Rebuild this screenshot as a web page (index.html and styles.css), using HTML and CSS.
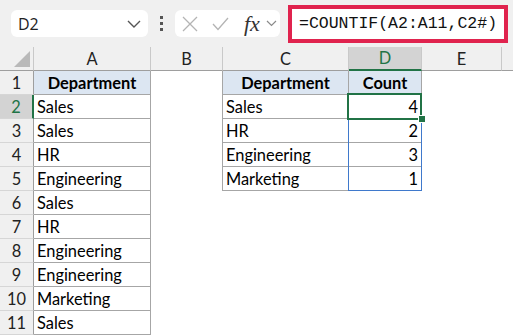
FILE: index.html
```html
<!DOCTYPE html>
<html lang="en">
<head>
  <meta charset="UTF-8" />
  <title>COUNTIF spill</title>
  <link rel="stylesheet" href="styles.css">
</head>
<body>
  <div class="toolbar">
    <div class="namebox">
      <span>D2</span>
      <svg width="14" height="8" viewBox="0 0 14 8"><path d="M1 1 L7 7 L13 1" fill="none" stroke="#555" stroke-width="1.4"/></svg>
    </div>
    <div class="dots"><i></i><i></i><i></i></div>
    <div class="fxbox">
      <svg width="16" height="16" viewBox="0 0 16 16"><path d="M1 1 L15 15 M15 1 L1 15" stroke="#b4b4b4" stroke-width="1.3"/></svg>
      <svg width="17" height="14" viewBox="0 0 17 14"><path d="M1 7 L6 12.5 L16 1" fill="none" stroke="#b4b4b4" stroke-width="1.3"/></svg>
      <span class="fx">fx</span>
      <svg width="11" height="7" viewBox="0 0 11 7"><path d="M1 1 L5.5 5.5 L10 1" fill="none" stroke="#8a8a8a" stroke-width="1.2"/></svg>
    </div>
    <div class="formula">=COUNTIF(A2:A11,C2#)</div>
  </div>

  <div class="sheet">
    <div class="corner"><span class="tri"></span></div>
    <div class="colhdr">A</div>
    <div class="colhdr">B</div>
    <div class="colhdr">C</div>
    <div class="colhdr sel">D</div>
    <div class="colhdr">E</div>
    <div class="colhdr rest"></div>

    <div class="rowhdr">1</div>
    <div class="cell bd th">Department</div>
    <div class="cell edge"></div>
    <div class="cell bd th">Department</div>
    <div class="cell bd th">Count</div>
    <div class="cell"></div>
    <div class="cell"></div>

    <div class="rowhdr sel">2</div>
    <div class="cell bd">Sales</div>
    <div class="cell edge"></div>
    <div class="cell bd">Sales</div>
    <div class="cell num active">4<span class="handle"></span></div>
    <div class="cell"></div>
    <div class="cell"></div>

    <div class="rowhdr">3</div>
    <div class="cell bd">Sales</div>
    <div class="cell edge"></div>
    <div class="cell bd">HR</div>
    <div class="cell bd num">2</div>
    <div class="cell"></div>
    <div class="cell"></div>

    <div class="rowhdr">4</div>
    <div class="cell bd">HR</div>
    <div class="cell edge"></div>
    <div class="cell bd">Engineering</div>
    <div class="cell bd num">3</div>
    <div class="cell"></div>
    <div class="cell"></div>

    <div class="rowhdr">5</div>
    <div class="cell bd">Engineering</div>
    <div class="cell edge"></div>
    <div class="cell bd">Marketing</div>
    <div class="cell bd num">1</div>
    <div class="cell"></div>
    <div class="cell"></div>

    <div class="rowhdr">6</div>
    <div class="cell bd">Sales</div>
    <div class="cell"></div>
    <div class="cell"></div>
    <div class="cell"></div>
    <div class="cell"></div>
    <div class="cell"></div>

    <div class="rowhdr">7</div>
    <div class="cell bd">HR</div>
    <div class="cell"></div>
    <div class="cell"></div>
    <div class="cell"></div>
    <div class="cell"></div>
    <div class="cell"></div>

    <div class="rowhdr">8</div>
    <div class="cell bd">Engineering</div>
    <div class="cell"></div>
    <div class="cell"></div>
    <div class="cell"></div>
    <div class="cell"></div>
    <div class="cell"></div>

    <div class="rowhdr">9</div>
    <div class="cell bd">Engineering</div>
    <div class="cell"></div>
    <div class="cell"></div>
    <div class="cell"></div>
    <div class="cell"></div>
    <div class="cell"></div>

    <div class="rowhdr">10</div>
    <div class="cell bd">Marketing</div>
    <div class="cell"></div>
    <div class="cell"></div>
    <div class="cell"></div>
    <div class="cell"></div>
    <div class="cell"></div>

    <div class="rowhdr">11</div>
    <div class="cell bd">Sales</div>
    <div class="cell"></div>
    <div class="cell"></div>
    <div class="cell"></div>
    <div class="cell"></div>
    <div class="cell"></div>
  </div>
</body>
</html>
```

FILE: styles.css
```css
body {
  margin: 0;
  background: #fff;
  font-family: 'Lato', 'Liberation Sans', sans-serif;
  color: #000;
  overflow: hidden;
}

.toolbar {
  height: 47px;
  background: #f0f0f0;
  display: flex;
  align-items: center;
  box-sizing: border-box;
}

.namebox {
  margin-left: 11px;
  width: 137px;
  height: 27px;
  background: #fff;
  border-radius: 6px;
  display: flex;
  align-items: center;
  justify-content: space-between;
  padding: 0 7px 0 7px;
  box-sizing: border-box;
  font-family: 'Open Sans', sans-serif;
  font-size: 16px;
  color: #222;
}

.dots {
  width: 27px;
  display: flex;
  flex-direction: column;
  align-items: center;
  gap: 3px;
}

.dots i {
  width: 3px;
  height: 3px;
  background: #555;
  display: block;
}

.fxbox {
  width: 105px;
  height: 27px;
  background: #fff;
  border-radius: 6px;
  display: flex;
  align-items: center;
  padding-left: 7px;
  box-sizing: border-box;
}

.fxbox svg:nth-child(2) {
  margin-left: 14px;
}

.fx {
  font-family: 'Liberation Serif', serif;
  font-style: italic;
  font-size: 22px;
  color: #333;
  margin-left: 15px;
  margin-right: 6px;
  line-height: 1;
}

.formula {
  margin-left: 8px;
  width: 220px;
  height: 38px;
  border: 4px solid #e0234e;
  background: #fff;
  box-sizing: border-box;
  font-family: 'Liberation Mono', monospace;
  font-size: 16.5px;
  line-height: 30px;
  padding-left: 7px;
  color: #111;
}

.sheet {
  display: grid;
  grid-template-columns: 34px 117px 72px 126px 73px 80px 1fr;
  grid-auto-rows: 24px;
  font-size: 16.4px;
}

.corner {
  background: #f0f0f0;
  border-right: 1px solid #c9c9c9;
  border-bottom: 1px solid #9e9e9e;
  position: relative;
}

.tri {
  position: absolute;
  right: 3px;
  bottom: 3px;
  width: 0;
  height: 0;
  border-left: 16px solid transparent;
  border-bottom: 16px solid #b9b9b9;
}

.colhdr {
  background: #f0f0f0;
  border-right: 1px solid #c9c9c9;
  border-bottom: 1px solid #9e9e9e;
  text-align: center;
  line-height: 23px;
  color: #222;
}

.colhdr.rest {
  border-right: none;
}

.colhdr.sel {
  background: #d3d3d3;
  color: #217346;
  border-bottom: 2px solid #217346;
  line-height: 22px;
}

.rowhdr {
  background: #f0f0f0;
  border-right: 1px solid #9e9e9e;
  border-bottom: 1px solid #d6d6d6;
  text-align: center;
  line-height: 23px;
  color: #222;
}

.rowhdr.sel {
  background: #d3d3d3;
  color: #217346;
  border-right: 2px solid #217346;
}

.cell {
  padding: 0 3px;
  line-height: 23px;
  white-space: nowrap;
}

.bd {
  border-right: 1px solid #a6a6a6;
  border-bottom: 1px solid #a6a6a6;
}

.edge {
  border-right: 1px solid #a6a6a6;
}

.th {
  background: #dce6f2;
  font-weight: bold;
  text-align: center;
}

.num {
  text-align: right;
}

.active {
  position: relative;
  border-right: 1px solid #a6a6a6;
  border-bottom: 1px solid #a6a6a6;
}

.active::before {
  content: "";
  position: absolute;
  left: -1px;
  top: -1px;
  width: 74px;
  height: 97px;
  border: 1px solid #3f79cc;
  box-sizing: border-box;
}

.active::after {
  content: "";
  position: absolute;
  left: -2px;
  top: -2px;
  width: 75px;
  height: 27px;
  border: 2px solid #217346;
  box-sizing: border-box;
}

.handle {
  position: absolute;
  right: -5px;
  bottom: -5px;
  width: 6px;
  height: 6px;
  background: #217346;
  border: 1px solid #fff;
  z-index: 2;
}
```
